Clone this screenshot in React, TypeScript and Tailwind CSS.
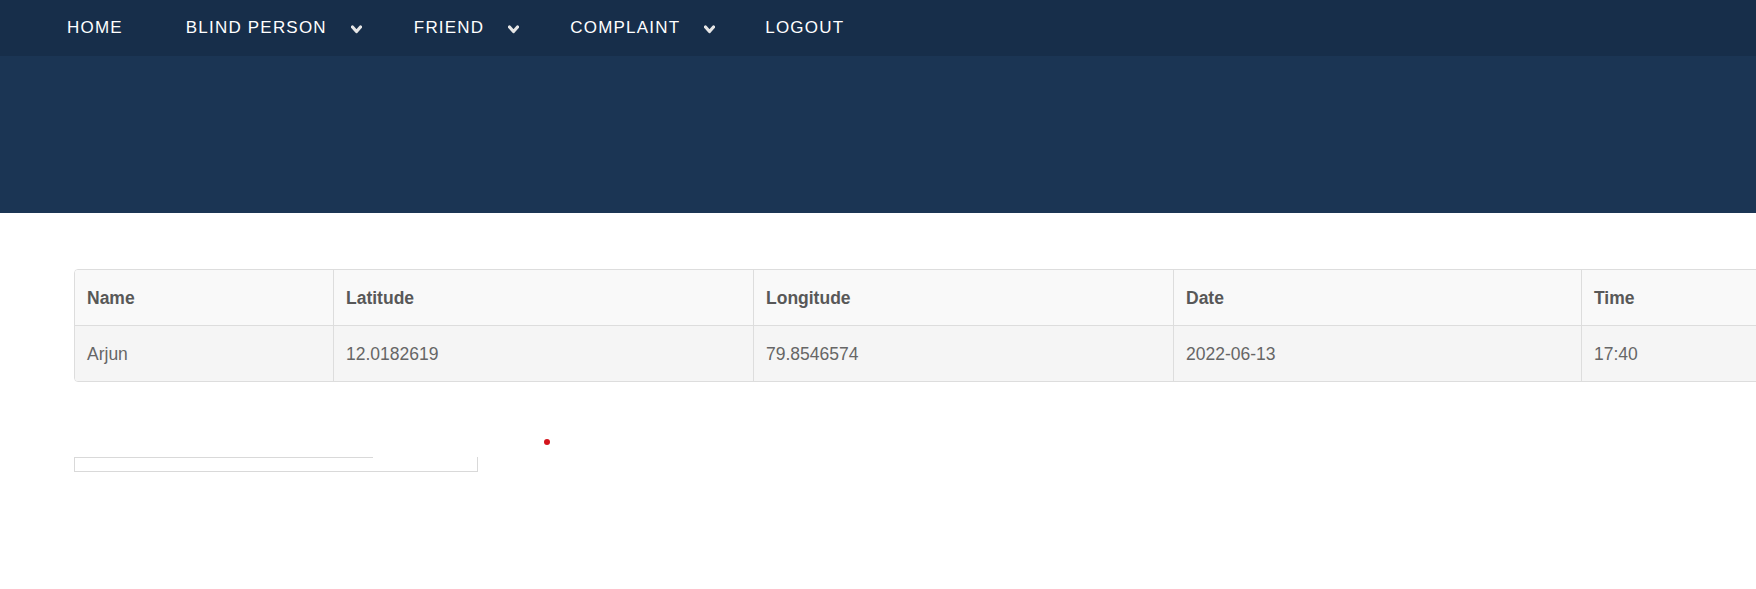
import React from "react";

const Chevron = () => (
  <svg width="11" height="9" viewBox="0 0 11 9" className="ml-[24px] mt-[3px]" aria-hidden>
    <path d="M1.5 2 L5.5 6.5 L9.5 2" fill="none" stroke="#e6e6e6" strokeWidth="3.2" strokeLinecap="round" strokeLinejoin="round" />
  </svg>
);

const rows = [
  { name: "Arjun", lat: "12.0182619", lng: "79.8546574", date: "2022-06-13", time: "17:40" },
];

export default function App() {
  const headers = ["Name", "Latitude", "Longitude", "Date", "Time"];
  return (
    <div className="min-h-[589px] w-full overflow-hidden bg-white" style={{ fontFamily: '"Liberation Sans", Arial, sans-serif' }}>
      <nav className="flex h-[56px] items-center bg-[#172e4a] pl-[67px] text-[17px] uppercase tracking-[1.2px] text-white">
        <span className="mr-[63px]">Home</span>
        <span className="flex items-center">Blind Person<Chevron /></span>
        <span className="ml-[52px] flex items-center">Friend<Chevron /></span>
        <span className="ml-[51px] flex items-center">Complaint<Chevron /></span>
        <span className="ml-[50px]">Logout</span>
      </nav>
      <div className="h-[157px] bg-[#1b3554]" />
      <div className="pl-[74px] pt-[56px]">
        <div className="w-[1906px] overflow-hidden rounded-[4px] border border-[#dddddd] text-[17.5px]">
          <div className="grid grid-cols-[258px_420px_420px_408px_1fr] border-b border-[#dddddd] bg-[#f9f9f9] font-bold text-[#585858]">
            {headers.map((h, i) => (
              <div key={h} className={`flex h-[55px] items-center px-[12px] pt-[1px] ${i > 0 ? "border-l border-[#dddddd]" : ""}`}>
                {h}
              </div>
            ))}
          </div>
          {rows.map((r) => (
            <div key={r.name} className="grid grid-cols-[258px_420px_420px_408px_1fr] bg-[#f5f5f5] text-[#666666]">
              {[r.name, r.lat, r.lng, r.date, r.time].map((v, i) => (
                <div key={i} className={`flex h-[55px] items-center px-[12px] pt-[1px] ${i > 0 ? "border-l border-[#dddddd]" : ""}`}>
                  {v}
                </div>
              ))}
            </div>
          ))}
        </div>
        <div className="ml-[470px] mt-[57px] h-[6px] w-[6px] rounded-full bg-[#d4141c]" />
        <div className="mt-[12px] h-[15px] w-[404px] border-x border-b border-[#d9d9d9]">
          <div className="h-px w-[298px] bg-[#d9d9d9]" />
        </div>
      </div>
    </div>
  );
}
